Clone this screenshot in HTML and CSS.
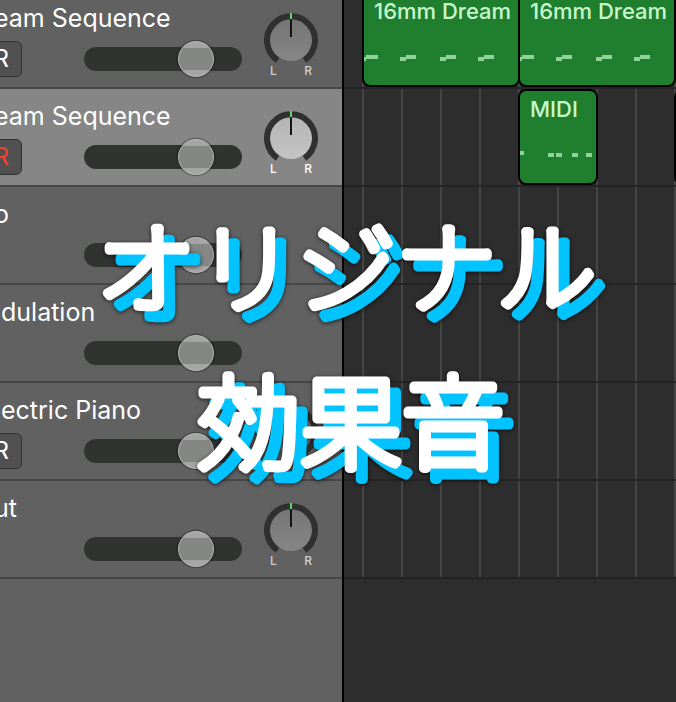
FILE: index.html
```
<!DOCTYPE html>
<html lang="ja">
<head>
  <meta charset="UTF-8">
  <meta name="viewport" content="width=device-width, initial-scale=1.0">
  <title>オリジナル効果音</title>
  <link rel="stylesheet" href="styles.css">
</head>
<body>

  <!-- Shared pan knob drawing -->
  <svg class="defs" aria-hidden="true">
    <defs>
      <linearGradient id="knob-dim" x1="0" y1="0" x2="0" y2="1">
        <stop offset="0" stop-color="#757575"/>
        <stop offset="1" stop-color="#868686"/>
      </linearGradient>
      <linearGradient id="knob-lit" x1="0" y1="0" x2="0" y2="1">
        <stop offset="0" stop-color="#b4b4b4"/>
        <stop offset="1" stop-color="#c4c4c4"/>
      </linearGradient>
      <symbol id="knob" viewBox="0 0 56 52">
        <circle class="knob-face" cx="28" cy="28" r="21"/>
        <path d="M14.6 48.2 A24 24 0 1 1 41.4 48.2" fill="none" stroke="#303030" stroke-width="6"/>
        <path d="M28 7 V25" stroke="#141414" stroke-width="2"/>
        <path d="M28 1 V7" stroke="#63d76c" stroke-width="2"/>
      </symbol>
    </defs>
  </svg>

  <main class="editor">
    <section class="headers">
      <div class="track">
        <div class="name cut">eam Sequence</div>
        <div class="controls">
          <div class="buttons"><button class="rec">R</button></div>
          <input type="range" class="volume" value="77" aria-label="Volume">
        </div>
        <div class="pan">
          <svg class="knob"><use href="#knob"/></svg>
          <div class="pan-labels"><span>L</span><span>R</span></div>
        </div>
      </div>
      <div class="track selected">
        <div class="name cut">eam Sequence</div>
        <div class="controls">
          <div class="buttons"><button class="rec armed">R</button></div>
          <input type="range" class="volume" value="77" aria-label="Volume">
        </div>
        <div class="pan">
          <svg class="knob"><use href="#knob"/></svg>
          <div class="pan-labels"><span>L</span><span>R</span></div>
        </div>
      </div>
      <div class="track">
        <div class="name cut">o</div>
        <div class="controls">
          <div class="buttons"></div>
          <input type="range" class="volume" value="77" aria-label="Volume">
        </div>
      </div>
      <div class="track">
        <div class="name">dulation</div>
        <div class="controls">
          <div class="buttons"></div>
          <input type="range" class="volume" value="77" aria-label="Volume">
        </div>
      </div>
      <div class="track">
        <div class="name">ectric Piano</div>
        <div class="controls">
          <div class="buttons"><button class="rec">R</button></div>
          <input type="range" class="volume" value="77" aria-label="Volume">
        </div>
        <div class="pan">
          <svg class="knob"><use href="#knob"/></svg>
        </div>
      </div>
      <div class="track">
        <div class="name cut">ut</div>
        <div class="controls">
          <div class="buttons"></div>
          <input type="range" class="volume" value="77" aria-label="Volume">
        </div>
        <div class="pan">
          <svg class="knob"><use href="#knob"/></svg>
          <div class="pan-labels"><span>L</span><span>R</span></div>
        </div>
      </div>
    </section>

    <section class="timeline">
      <div class="lane">
        <div class="region">
          <div class="region-name">16mm Dream</div>
          <svg class="notes" width="154" height="8" fill="#8fd39a">
            <path d="M0 4h2v4h-2z M2 2h12v4h-12z M36 4h6v4h-6z M42 2h10v4h-10z M76 4h6v4h-6z M82 2h10v4h-10z M114 4h6v4h-6z M120 2h10v4h-10z"/>
          </svg>
        </div>
        <div class="region">
          <div class="region-name">16mm Dream</div>
          <svg class="notes" width="154" height="8" fill="#8fd39a">
            <path d="M0 4h2v4h-2z M2 2h12v4h-12z M36 4h6v4h-6z M42 2h10v4h-10z M76 4h6v4h-6z M82 2h10v4h-10z M114 4h6v4h-6z M120 2h10v4h-10z"/>
          </svg>
        </div>
      </div>
      <div class="lane">
        <div class="gap"></div>
        <div class="region short">
          <div class="region-name">MIDI</div>
          <svg class="notes" width="76" height="8" fill="#8fd39a">
            <path d="M0 0h4v4h-4z M28 2h6v4h-6z M36 2h6v4h-6z M52 2h6v4h-6z M66 2h6v4h-6z"/>
          </svg>
        </div>
        <div class="gap half"></div>
        <div class="region"></div>
      </div>
      <div class="lane"></div>
      <div class="lane"></div>
      <div class="lane"></div>
      <div class="lane"></div>
    </section>
  </main>

  <h1 class="title">
    <svg class="title-art" width="560" height="300">
      <text class="kana" x="0" y="102">オリジナル</text>
      <text class="kanji" x="102" y="258">効果音</text>
    </svg>
  </h1>

</body>
</html>
```
FILE: styles.css
```
body {
  display: flow-root;
  margin: 0;
  height: 100vh;
  overflow: hidden;
  position: relative;
  background: #2d2d2d;
  color: #fff;
  font-family: Inter, "Noto Sans CJK JP", sans-serif;
}

.defs {
  position: absolute;
  width: 0;
  height: 0;
}

.editor {
  display: flex;
  min-height: calc(100vh + 9px);
  margin-top: -9px;
}

/* Track headers */
.headers {
  flex: 0 0 342px;
  background: #616161;
  border-right: 2px solid #000;
}

.track {
  box-sizing: border-box;
  height: 98px;
  border-bottom: 2px solid #474747;
  display: grid;
  grid-template-columns: 1fr 79px;
  grid-template-rows: 45px 1fr;
}

.track.selected {
  background: #868686;
}

.name {
  margin-left: 1px;
  padding-top: 11px;
  font-size: 25px;
  line-height: 32px;
  white-space: nowrap;
}

.name.cut {
  margin-left: -6px;
}

.controls {
  grid-row: 2;
  display: flex;
  align-items: center;
  height: 46px;
}

.buttons {
  width: 84px;
}

.rec {
  box-sizing: border-box;
  display: block;
  width: 34px;
  height: 36px;
  margin-left: -12px;
  padding: 0 12px 0 0;
  border: 1px solid #303030;
  border-radius: 6px;
  background: #515151;
  color: #fff;
  font: 24px/32px Inter, sans-serif;
  text-align: right;
}

.rec.armed {
  color: #f5402f;
}

.volume {
  -webkit-appearance: none;
  appearance: none;
  width: 158px;
  height: 24px;
  margin: 0;
  border-radius: 12px;
  background: #313331;
}

.volume::-webkit-slider-thumb {
  -webkit-appearance: none;
  box-sizing: border-box;
  width: 36px;
  height: 36px;
  border: 1px solid #b9b9b9;
  border-radius: 50%;
  background: linear-gradient(#a5a5a5 6px, #858785 6px, #858785 28px, #a5a5a5 28px);
  box-shadow: 0 0 1px 1px rgba(0, 0, 0, 0.4);
}

.pan {
  grid-column: 2;
  grid-row: 1 / 3;
  padding-top: 21px;
}

.knob {
  display: block;
  width: 56px;
  height: 52px;
  fill: url(#knob-dim);
}

.selected .knob {
  fill: url(#knob-lit);
}

.pan-labels {
  display: flex;
  justify-content: space-between;
  width: 42px;
  padding-left: 7px;
  font-size: 12px;
  font-weight: 500;
  line-height: 14px;
  color: #cfcfcf;
}

.selected .pan-labels {
  color: #fff;
}

/* Timeline */
.timeline {
  flex: 1;
  min-width: 0;
  overflow: hidden;
}

.lane {
  box-sizing: border-box;
  display: flex;
  height: 98px;
  padding-left: 18px;
  border-bottom: 2px solid #242424;
  background: repeating-linear-gradient(90deg, #454545 0 2px, transparent 2px 39px) 18px 0 no-repeat;
}

.region {
  box-sizing: border-box;
  flex: 0 0 158px;
  height: 96px;
  margin-right: -2px;
  border: 2px solid #000;
  border-radius: 8px;
  background: #207f2e;
  color: #c9f7cd;
  overflow: hidden;
}

.region.short {
  flex-basis: 80px;
}

.region-name {
  padding: 2px 0 0 10px;
  font-size: 22px;
  font-weight: 500;
  line-height: 32px;
  white-space: nowrap;
}

.notes {
  display: block;
  margin-top: 26px;
}

.gap {
  flex: 0 0 156px;
}

.gap.half {
  flex-basis: 78px;
}

/* Title laid over the editor */
.title {
  position: absolute;
  top: 203px;
  left: 96px;
  margin: 0;
}

.title-art {
  display: block;
  overflow: visible;
  font-family: "Noto Sans CJK JP", sans-serif;
  font-weight: 100;
  fill: #fff;
  stroke: #fff;
  stroke-width: 9px;
  stroke-linejoin: round;
  filter: drop-shadow(11px 11px 0 #00c3ff) drop-shadow(0 1px 2px rgba(0, 0, 0, 0.7));
}

.kana {
  font-size: 100px;
}

.kanji {
  font-size: 102px;
}
```
